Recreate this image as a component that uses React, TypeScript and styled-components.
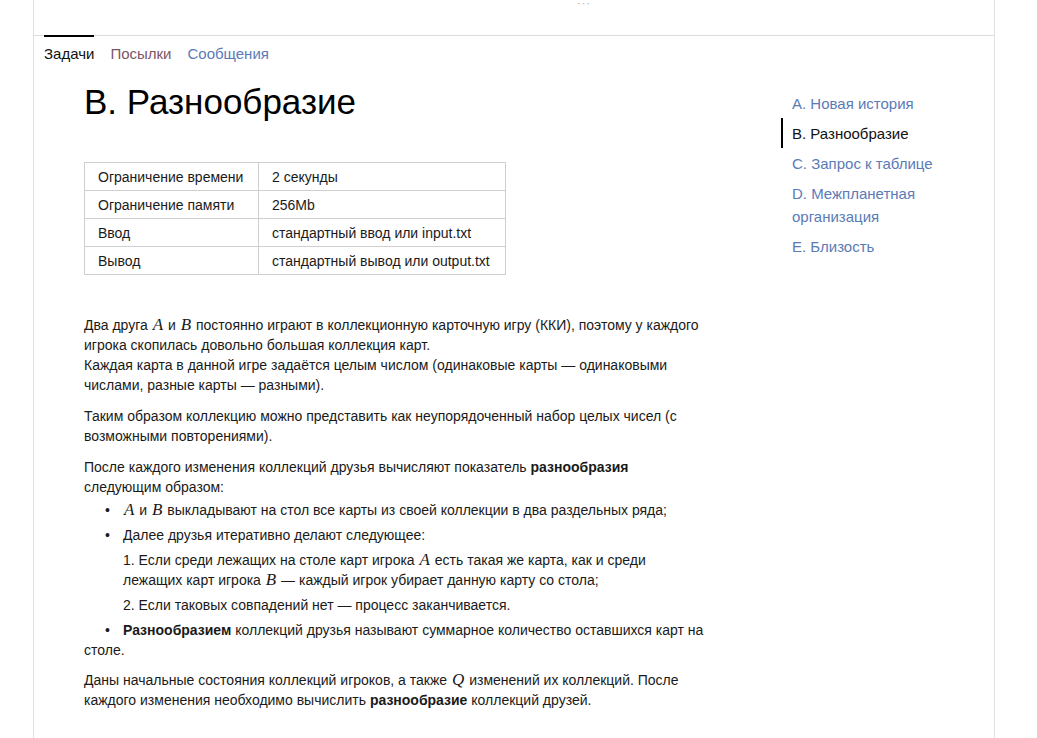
import React from "react";
import styled, { createGlobalStyle } from "styled-components";

const Global = createGlobalStyle`
  html, body { margin: 0; padding: 0; background: #fff; }
  body { font-family: "Liberation Sans", Arial, sans-serif; color: #1a1a1a; }
`;

const Page = styled.div`
  margin-left: 33px;
  width: 962px;
  min-height: 738px;
  border-left: 1px solid #e2e2e2;
  border-right: 1px solid #e2e2e2;
  box-sizing: border-box;
`;

const Header = styled.div`
  height: 36px;
  border-bottom: 1px solid #dcdcdc;
  box-sizing: border-box;
  padding-left: 543px;
  font-size: 11px;
  line-height: 7px;
  color: #aaa;
  letter-spacing: 1px;
`;

const Tabs = styled.nav`
  display: flex;
  gap: 16px;
  padding-left: 10px;
  margin-top: -1px;
`;

const Tab = styled.a<{ $active?: boolean; $color: string }>`
  font-size: 15px;
  line-height: 20px;
  padding-top: 7px;
  border-top: 2px solid ${(p) => (p.$active ? "#000" : "transparent")};
  color: ${(p) => p.$color};
  text-decoration: none;
`;

const Body = styled.div`
  display: grid;
  grid-template-columns: 621px 180px;
  column-gap: 76px;
  padding-left: 50px;
`;

const Main = styled.main`
  font-size: 14px;
  line-height: 20px;
`;

const Title = styled.h1`
  font-size: 35px;
  font-weight: 400;
  line-height: 40px;
  margin: 18px 0 40px;
  color: #000;
`;

const Table = styled.table`
  border-collapse: collapse;
  margin-bottom: 40px;
  td {
    border: 1px solid #cfcfcf;
    height: 28px;
    padding: 0 13px;
    box-sizing: border-box;
    font-size: 14px;
  }
  td:first-child { width: 174px; }
  td:last-child { width: 247px; }
`;

const P = styled.p<{ $tight?: boolean }>`
  margin: 0 0 ${(p) => (p.$tight ? "3px" : "11px")};
`;

const M = styled.i`
  font-family: "Liberation Serif", "Times New Roman", serif;
  font-size: 17px;
  font-weight: 400;
  font-style: italic;
  line-height: 0;
  padding: 0 1px;
`;

const List = styled.ul`
  list-style: none;
  margin: 0 0 10px;
  padding: 0;
`;

const Item = styled.li`
  margin-bottom: 5px;
  &::before {
    content: "•";
    display: inline-block;
    width: 18px;
    margin-left: 21px;
  }
`;

const Sub = styled.ol`
  list-style: none;
  margin: 5px 0 0;
  padding: 0 0 0 39px;
`;

const SubItem = styled.li`
  margin-bottom: 5px;
`;

const Side = styled.aside`
  padding-top: 24px;
  font-size: 15px;
  line-height: 23px;
`;

const SideItem = styled.a<{ $active?: boolean }>`
  display: block;
  padding: 4px 10px 3px 9px;
  border-left: 2px solid ${(p) => (p.$active ? "#000" : "transparent")};
  color: ${(p) => (p.$active ? "#111" : "#5b7bb6")};
  text-decoration: none;
  max-width: 150px;
`;

export default function App() {
  return (
    <>
      <Global />
      <Page>
        <Header>···</Header>
        <Tabs>
          <Tab $active $color="#111">Задачи</Tab>
          <Tab $color="#7c5566">Посылки</Tab>
          <Tab $color="#5b7bb6">Сообщения</Tab>
        </Tabs>
        <Body>
          <Main>
            <Title>B. Разнообразие</Title>
            <Table>
              <tbody>
                <tr><td>Ограничение времени</td><td>2 секунды</td></tr>
                <tr><td>Ограничение памяти</td><td>256Mb</td></tr>
                <tr><td>Ввод</td><td>стандартный ввод или input.txt</td></tr>
                <tr><td>Вывод</td><td>стандартный вывод или output.txt</td></tr>
              </tbody>
            </Table>
            <P>
              Два друга <M>A</M> и <M>B</M> постоянно играют в коллекционную карточную игру (ККИ), поэтому у каждого игрока скопилась довольно большая коллекция карт.
              <br />
              Каждая карта в данной игре задаётся целым числом (одинаковые карты — одинаковыми числами, разные карты — разными).
            </P>
            <P>
              Таким образом коллекцию можно представить как неупорядоченный набор целых чисел (с возможными повторениями).
            </P>
            <P $tight>
              После каждого изменения коллекций друзья вычисляют показатель <b>разнообразия</b> следующим образом:
            </P>
            <List>
              <Item><M>A</M> и <M>B</M> выкладывают на стол все карты из своей коллекции в два раздельных ряда;</Item>
              <Item>
                Далее друзья итеративно делают следующее:
                <Sub>
                  <SubItem>1. Если среди лежащих на столе карт игрока <M>A</M> есть такая же карта, как и среди лежащих карт игрока <M>B</M> — каждый игрок убирает данную карту со стола;</SubItem>
                  <SubItem>2. Если таковых совпадений нет — процесс заканчивается.</SubItem>
                </Sub>
              </Item>
              <Item><b>Разнообразием</b> коллекций друзья называют суммарное количество оставшихся карт на столе.</Item>
            </List>
            <P>
              Даны начальные состояния коллекций игроков, а также <M>Q</M> изменений их коллекций. После каждого изменения необходимо вычислить <b>разнообразие</b> коллекций друзей.
            </P>
          </Main>
          <Side>
            <SideItem>A. Новая история</SideItem>
            <SideItem $active>B. Разнообразие</SideItem>
            <SideItem>C. Запрос к таблице</SideItem>
            <SideItem>D. Межпланетная организация</SideItem>
            <SideItem>E. Близость</SideItem>
          </Side>
        </Body>
      </Page>
    </>
  );
}
